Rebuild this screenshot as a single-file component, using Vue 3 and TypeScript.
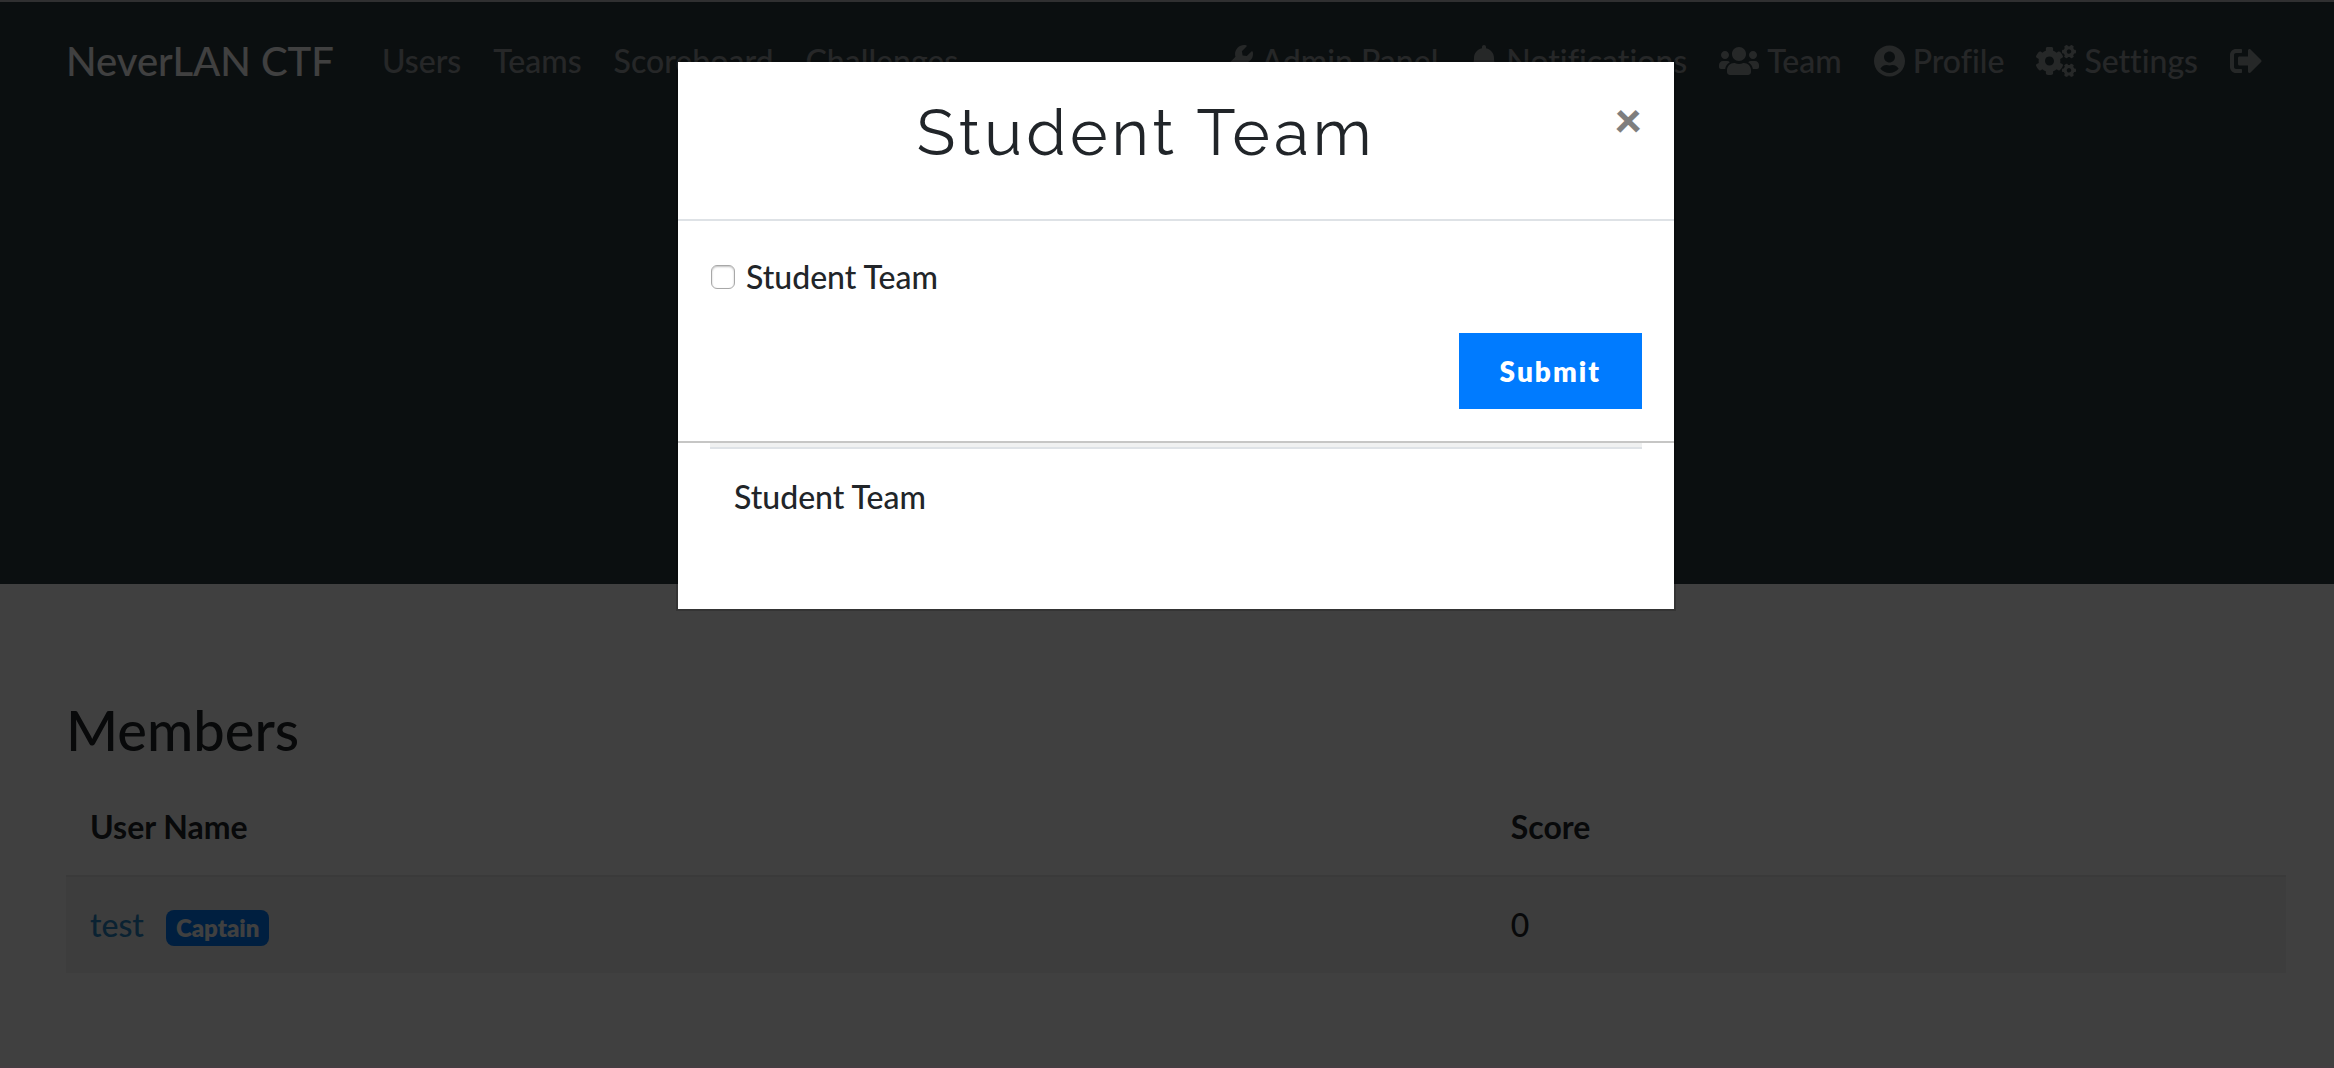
<script setup lang="ts">
import { ref } from 'vue'

interface NavItem {
  label: string
  icon?: { width: number; viewBox: string; path: string }
}

interface Member {
  name: string
  captain: boolean
  score: number
}

const mainNav: NavItem[] = [
  { label: 'Users' },
  { label: 'Teams' },
  { label: 'Scoreboard' },
  { label: 'Challenges' },
]

const userNav: NavItem[] = [
  {
    label: 'Admin Panel',
    icon: {
      width: 32,
      viewBox: '0 0 512 512',
      path: 'M507.73 109.1c-2.24-9.03-13.54-12.09-20.12-5.51l-74.36 74.36-67.88-11.31-11.31-67.88 74.36-74.36c6.62-6.62 3.43-17.9-5.66-20.16-47.38-11.74-99.55.91-136.58 37.93-39.64 39.64-50.55 97.1-34.05 147.2L18.74 402.76c-24.99 24.99-24.99 65.51 0 90.5 24.99 24.99 65.51 24.99 90.5 0l213.21-213.21c50.12 16.71 107.47 5.68 147.37-34.22 37.07-37.07 49.7-89.32 37.91-136.73zM64 472c-13.25 0-24-10.75-24-24 0-13.26 10.75-24 24-24s24 10.74 24 24c0 13.25-10.75 24-24 24z',
    },
  },
  {
    label: 'Notifications',
    icon: {
      width: 28,
      viewBox: '0 0 448 512',
      path: 'M224 512c35.32 0 63.97-28.65 63.97-64H160.03c0 35.35 28.65 64 63.97 64zm215.39-149.71c-19.32-20.76-55.47-51.99-55.47-154.29 0-77.7-54.48-139.9-127.94-155.16V32c0-17.67-14.32-32-31.98-32s-31.98 14.33-31.98 32v20.84C118.56 68.1 64.08 130.3 64.08 208c0 102.3-36.15 133.53-55.47 154.29-6 6.45-8.66 14.16-8.61 21.71.11 16.4 12.98 32 32.1 32h383.8c19.12 0 32-15.6 32.1-32 .05-7.55-2.61-15.27-8.61-21.71z',
    },
  },
  {
    label: 'Team',
    icon: {
      width: 40,
      viewBox: '0 0 640 512',
      path: 'M96 224c35.3 0 64-28.7 64-64s-28.7-64-64-64-64 28.7-64 64 28.7 64 64 64zm448 0c35.3 0 64-28.7 64-64s-28.7-64-64-64-64 28.7-64 64 28.7 64 64 64zm32 32h-64c-17.6 0-33.5 7.1-45.1 18.6 40.3 22.1 68.9 62 75.1 109.4h66c17.7 0 32-14.3 32-32v-32c0-35.3-28.7-64-64-64zm-256 0c61.9 0 112-50.1 112-112S381.9 32 320 32 208 82.1 208 144s50.1 112 112 112zm76.8 32h-8.3c-20.8 10-43.9 16-68.5 16s-47.6-6-68.5-16h-8.3C179.6 288 128 339.6 128 403.2V432c0 26.5 21.5 48 48 48h288c26.5 0 48-21.5 48-48v-28.8c0-63.6-51.6-115.2-115.2-115.2zm-223.7-13.4C161.5 263.1 145.6 256 128 256H64c-35.3 0-64 28.7-64 64v32c0 17.7 14.3 32 32 32h65.9c6.3-47.4 34.9-87.3 75.2-109.4z',
    },
  },
  {
    label: 'Profile',
    icon: {
      width: 31,
      viewBox: '0 0 496 512',
      path: 'M248 8C111 8 0 119 0 256s111 248 248 248 248-111 248-248S385 8 248 8zm0 96c48.6 0 88 39.4 88 88s-39.4 88-88 88-88-39.4-88-88 39.4-88 88-88zm0 344c-58.7 0-111.3-26.6-146.5-68.2 18.8-35.4 55.6-59.8 98.5-59.8 2.4 0 4.8.4 7.1 1.1 13 4.2 26.6 6.9 40.9 6.9 14.3 0 28-2.7 40.9-6.9 2.3-.7 4.7-1.1 7.1-1.1 42.9 0 79.7 24.4 98.5 59.8C359.3 421.4 306.7 448 248 448z',
    },
  },
  {
    label: 'Settings',
    icon: {
      width: 40,
      viewBox: '0 0 640 512',
      path: 'M512.1 191l-8.2 14.3c-3 5.3-9.4 7.5-15.1 5.4-11.8-4.4-22.6-10.7-32.1-18.6-4.6-3.8-5.8-10.5-2.8-15.7l8.2-14.3c-6.9-8-12.3-17.3-15.9-27.4h-16.5c-6 0-11.2-4.3-12.2-10.3-2-12-2.1-24.6 0-37.1 1-6 6.2-10.4 12.2-10.4h16.5c3.6-10.1 9-19.4 15.9-27.4l-8.2-14.3c-3-5.2-1.9-11.9 2.8-15.7 9.5-7.9 20.4-14.2 32.1-18.6 5.7-2.1 12.1.1 15.1 5.4l8.2 14.3c10.5-1.9 21.2-1.9 31.7 0L552 6.3c3-5.3 9.4-7.5 15.1-5.4 11.8 4.4 22.6 10.7 32.1 18.6 4.6 3.8 5.8 10.5 2.8 15.7l-8.2 14.3c6.9 8 12.3 17.3 15.9 27.4h16.5c6 0 11.2 4.3 12.2 10.3 2 12 2.1 24.6 0 37.1-1 6-6.2 10.4-12.2 10.4h-16.5c-3.6 10.1-9 19.4-15.9 27.4l8.2 14.3c3 5.2 1.9 11.9-2.8 15.7-9.5 7.9-20.4 14.2-32.1 18.6-5.7 2.1-12.1-.1-15.1-5.4l-8.2-14.3c-10.4 1.9-21.2 1.9-31.7 0zm-10.5-58.8c38.5 29.6 82.4-14.3 52.8-52.8-38.5-29.7-82.4 14.3-52.8 52.8zM386.3 286.1l33.7 16.8c10.1 5.8 14.5 18.1 10.5 29.1-8.9 24.2-26.4 46.4-42.6 65.8-7.4 8.9-20.2 11.1-30.3 5.3l-29.1-16.8c-16 13.7-34.6 24.6-54.9 31.7v33.6c0 11.6-8.3 21.6-19.7 23.6-24.6 4.2-50.4 4.4-75.9 0-11.5-2-20-11.9-20-23.6V418c-20.3-7.2-38.9-18-54.9-31.7L74 403c-10 5.8-22.9 3.6-30.3-5.3-16.2-19.4-33.3-41.6-42.2-65.7-4-10.9.4-23.2 10.5-29.1l33.3-16.8c-3.9-20.9-3.9-42.4 0-63.4L12 205.8c-10.1-5.8-14.6-18.1-10.5-29 8.9-24.2 26-46.4 42.2-65.8 7.4-8.9 20.2-11.1 30.3-5.3l29.1 16.8c16-13.7 34.6-24.6 54.9-31.7V57.1c0-11.5 8.2-21.5 19.6-23.5 24.6-4.2 50.5-4.4 76-.1 11.5 2 20 11.9 20 23.6v33.6c20.3 7.2 38.9 18 54.9 31.7l29.1-16.8c10-5.8 22.9-3.6 30.3 5.3 16.2 19.4 33.2 41.6 42.1 65.8 4 10.9.1 23.2-10 29.1l-33.7 16.8c3.9 21 3.9 42.5 0 63.5zm-117.6 21.1c59.2-77-28.7-164.9-105.7-105.7-59.2 77 28.7 164.9 105.7 105.7zm243.4 182.7l-8.2 14.3c-3 5.3-9.4 7.5-15.1 5.4-11.8-4.4-22.6-10.7-32.1-18.6-4.6-3.8-5.8-10.5-2.8-15.7l8.2-14.3c-6.9-8-12.3-17.3-15.9-27.4h-16.5c-6 0-11.2-4.3-12.2-10.3-2-12-2.1-24.6 0-37.1 1-6 6.2-10.4 12.2-10.4h16.5c3.6-10.1 9-19.4 15.9-27.4l-8.2-14.3c-3-5.2-1.9-11.9 2.8-15.7 9.5-7.9 20.4-14.2 32.1-18.6 5.7-2.1 12.1.1 15.1 5.4l8.2 14.3c10.5-1.9 21.2-1.9 31.7 0l8.2-14.3c3-5.3 9.4-7.5 15.1-5.4 11.8 4.4 22.6 10.7 32.1 18.6 4.6 3.8 5.8 10.5 2.8 15.7l-8.2 14.3c6.9 8 12.3 17.3 15.9 27.4h16.5c6 0 11.2 4.3 12.2 10.3 2 12 2.1 24.6 0 37.1-1 6-6.2 10.4-12.2 10.4h-16.5c-3.6 10.1-9 19.4-15.9 27.4l8.2 14.3c3 5.2 1.9 11.9-2.8 15.7-9.5 7.9-20.4 14.2-32.1 18.6-5.7 2.1-12.1-.1-15.1-5.4l-8.2-14.3c-10.4 1.9-21.2 1.9-31.7 0zM501.6 431c38.5 29.6 82.4-14.3 52.8-52.8-38.5-29.6-82.4 14.3-52.8 52.8z',
    },
  },
  {
    label: '',
    icon: {
      width: 32,
      viewBox: '0 0 512 512',
      path: 'M497 273L329 441c-15 15-41 4.5-41-17v-96H152c-13.3 0-24-10.7-24-24v-96c0-13.3 10.7-24 24-24h136V88c0-21.4 25.9-32 41-17l168 168c9.3 9.4 9.3 24.6 0 34zM192 436v-40c0-6.6-5.4-12-12-12H96c-17.7 0-32-14.3-32-32V160c0-17.7 14.3-32 32-32h84c6.6 0 12-5.4 12-12V76c0-6.6-5.4-12-12-12H96c-53 0-96 43-96 96v192c0 53 43 96 96 96h84c6.6 0 12-5.4 12-12z',
    },
  },
]

const members: Member[] = [{ name: 'test', captain: true, score: 0 }]

const studentTeam = ref(false)
const open = ref(true)
</script>

<template>
  <div class="page">
    <header class="masthead">
      <nav class="container navbar">
        <a href="#" class="brand">NeverLAN CTF</a>
        <ul class="nav">
          <li v-for="item in mainNav" :key="item.label">
            <a href="#" class="nav-link">{{ item.label }}</a>
          </li>
        </ul>
        <ul class="nav nav-end">
          <li v-for="item in userNav" :key="item.label">
            <a href="#" class="nav-link" :aria-label="item.label || 'Logout'">
              <svg
                v-if="item.icon"
                class="icon"
                :width="item.icon.width"
                height="32"
                :viewBox="item.icon.viewBox"
                aria-hidden="true"
              >
                <path :d="item.icon.path" />
              </svg>
              <span v-if="item.label">{{ item.label }}</span>
            </a>
          </li>
        </ul>
      </nav>
    </header>

    <main class="members">
      <div class="container">
        <h3>Members</h3>
        <table class="table">
          <thead>
            <tr>
              <th class="col-name" scope="col">User Name</th>
              <th scope="col">Score</th>
            </tr>
          </thead>
          <tbody>
            <tr v-for="member in members" :key="member.name">
              <td>
                <a href="#" class="member-link">{{ member.name }}</a>
                <span v-if="member.captain" class="badge">Captain</span>
              </td>
              <td>{{ member.score }}</td>
            </tr>
          </tbody>
        </table>
      </div>
    </main>

    <div v-if="open" class="backdrop">
      <section class="modal" role="dialog" aria-modal="true" aria-labelledby="modal-title">
        <div class="modal-header">
          <h2 id="modal-title">Student Team</h2>
          <button type="button" class="close" aria-label="Close" @click="open = false">×</button>
        </div>
        <form class="modal-form" @submit.prevent>
          <label class="check">
            <input v-model="studentTeam" type="checkbox" />
            <span>Student Team</span>
          </label>
          <button type="submit" class="submit">Submit</button>
        </form>
        <div class="modal-list">
          <div class="list-edge"></div>
          <p>Student Team</p>
        </div>
      </section>
    </div>
  </div>
</template>

<style>
body {
  margin: 0;
  background: #fff;
}
</style>

<style scoped>
.page {
  min-height: 100vh;
  box-sizing: border-box;
  font-family: Lato, 'Open Sans', sans-serif;
  font-size: 32px;
  font-weight: 500;
  font-variant-ligatures: none;
  line-height: 48px;
  color: #212529;
}

.container {
  box-sizing: border-box;
  max-width: 2280px;
  margin: 0 auto;
  padding: 0 30px;
}

.masthead {
  box-sizing: border-box;
  min-height: 584px;
  padding: 19px 0 0 18px;
  border-top: 2px solid #c0c0c4;
  background: #2e3c40;
}

.navbar {
  display: flex;
  align-items: center;
}

.brand {
  margin-right: 32px;
  padding: 10px 0;
  font-size: 40px;
  line-height: 60px;
  color: #fff;
  text-decoration: none;
  white-space: nowrap;
}

.nav {
  display: flex;
  margin: 0;
  padding: 0;
  list-style: none;
}

.nav-end {
  margin-left: auto;
}

.nav-link {
  display: flex;
  align-items: center;
  height: 48px;
  padding: 16px;
  color: rgba(255, 255, 255, 0.5);
  text-decoration: none;
  white-space: nowrap;
}

.icon {
  margin-right: 8px;
  fill: currentColor;
}

.members {
  padding: 112px 0 64px 18px;
}

h3 {
  margin: 0 0 16px;
  font-size: 56px;
  font-weight: 500;
  line-height: 67px;
}

.table {
  width: 100%;
  border-spacing: 0;
}

.table th,
.table td {
  padding: 24px;
  text-align: left;
}

.table td {
  border-top: 2px solid #e6e6e6;
  background: #f2f2f2;
}

.table .col-name {
  box-sizing: border-box;
  width: 64%;
}

.member-link {
  margin-right: 22px;
  color: #2888c8;
  text-decoration: none;
}

.badge {
  display: inline-block;
  padding: 6px 10px;
  border-radius: 8px;
  background: #007bff;
  color: #fff;
  font-size: 24px;
  font-weight: 800;
  line-height: 24px;
}

.backdrop {
  position: fixed;
  inset: 0;
  overflow: auto;
  padding: 60px 0 0 18px;
  border-bottom: 2px solid #443e42;
  background: rgba(0, 0, 0, 0.75);
}

.modal {
  box-sizing: border-box;
  max-width: 1000px;
  margin: 0 auto;
  border: 2px solid rgba(0, 0, 0, 0.2);
  background: #fff;
  background-clip: padding-box;
}

.modal-header {
  display: flex;
  align-items: flex-start;
  padding: 32px;
  border-bottom: 2px solid #dee2e6;
}

.modal-header h2 {
  flex: 1;
  margin: 0 0 16px;
  font-family: Raleway, Lato, sans-serif;
  font-size: 64px;
  font-weight: 400;
  line-height: 77px;
  letter-spacing: 4px;
  text-align: center;
}

.close {
  margin: -32px -32px -32px 0;
  padding: 32px;
  border: 0;
  background: none;
  color: #000;
  font: 800 48px/50px Lato, sans-serif;
  opacity: 0.5;
}

.modal-form {
  display: flex;
  flex-direction: column;
  padding: 32px;
  border-bottom: 2px solid #c6c6c5;
}

.check {
  display: flex;
  align-items: center;
  gap: 10px;
  margin-bottom: 32px;
}

.check input {
  appearance: none;
  box-sizing: border-box;
  width: 24px;
  height: 24px;
  margin: 0 1px;
  border: 1px solid #a8a8a8;
  border-radius: 6px;
  background: #fff;
  box-shadow: inset 0 1px 2px rgba(0, 0, 0, 0.25);
}

.check input:checked {
  background: #007bff;
}

.submit {
  align-self: flex-end;
  padding: 14px 41px;
  border: 0;
  background: #007bff;
  color: #fff;
  font: 800 28px/48px Lato, sans-serif;
  letter-spacing: 2px;
}

.modal-list {
  padding: 0 32px 64px;
}

.list-edge {
  height: 4px;
  border-bottom: 2px solid #dee2e6;
  background: #f0f1f1;
}

.modal-list p {
  margin: 0;
  padding: 24px;
}
</style>
